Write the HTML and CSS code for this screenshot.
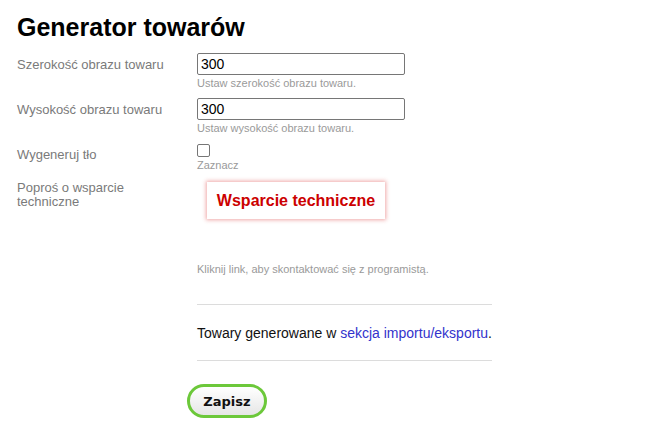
FILE: index.html
```html
<!DOCTYPE html>
<html lang="pl">
<head>
<meta charset="utf-8">
<title>Generator towarów</title>
<link rel="stylesheet" href="styles.css">
</head>
<body>
<div class="page">
  <h1 class="title">Generator towarów</h1>
  <form class="form">
    <div class="row">
      <label class="label">Szerokość obrazu towaru</label>
      <div class="field">
        <input class="input" type="text" value="300">
        <div class="hint">Ustaw szerokość obrazu towaru.</div>
      </div>
    </div>
    <div class="row">
      <label class="label">Wysokość obrazu towaru</label>
      <div class="field">
        <input class="input" type="text" value="300">
        <div class="hint">Ustaw wysokość obrazu towaru.</div>
      </div>
    </div>
    <div class="row row-check">
      <label class="label label-check">Wygeneruj tło</label>
      <div class="field">
        <span class="checkbox"></span>
        <div class="hint">Zaznacz</div>
      </div>
    </div>
    <div class="row row-support">
      <label class="label label-support">Poproś o wsparcie techniczne</label>
      <div class="field">
        <a class="support-btn">Wsparcie techniczne</a>
        <div class="hint hint-support">Kliknij link, aby skontaktować się z programistą.</div>
      </div>
    </div>
    <div class="info">
      <hr class="sep">
      <p class="info-text">Towary generowane w <a class="link">sekcja importu/eksportu</a>.</p>
      <hr class="sep">
    </div>
    <div class="actions">
      <button type="button" class="save">Zapisz</button>
    </div>
  </form>
</div>
</body>
</html>
```
FILE: styles.css
```css
* { box-sizing: border-box; }
html, body { margin: 0; padding: 0; background: #fff; }
body { font-family: "Liberation Sans", Arial, sans-serif; color: #000; }
.page { padding: 11px 17px 0 17px; }
.title {
  margin: 0;
  font-size: 25px;
  line-height: 32px;
  font-weight: bold;
}
.form { margin-top: 10px; }
.row { display: flex; margin-bottom: 8px; }
.label {
  width: 180px;
  flex: none;
  font-size: 13px;
  color: #7a7a7a;
  padding-top: 5px;
  line-height: 14px;
}
.field { display: flex; flex-direction: column; }
.input {
  width: 208px;
  height: 22px;
  margin: 0;
  border: 1px solid #767676;
  border-radius: 2px;
  padding: 1px 3px;
  font-family: "Liberation Sans", Arial, sans-serif;
  font-size: 14px;
  color: #000;
}
.hint {
  font-size: 11px;
  color: #9a9a9a;
  line-height: 14px;
  margin-top: 1px;
}
.row-check { margin-top: 0; }
.label-check { padding-top: 5px; }
.checkbox {
  display: block;
  width: 13px;
  height: 13px;
  border: 1px solid #767676;
  border-radius: 2px;
  margin-top: 1px;
}
.row-support { margin-top: 6px; }
.label-support { width: 130px; margin-right: 50px; padding-top: 1px; }
.support-btn {
  display: block;
  margin: 2px 0 0 10px;
  width: 178px;
  height: 37px;
  line-height: 37px;
  text-align: center;
  background: #fff;
  color: #cc0000;
  font-weight: bold;
  font-size: 16px;
  box-shadow: 0 0 4px 1px rgba(220, 60, 60, 0.45);
}
.hint-support { margin-top: 43px; }
.info { margin-left: 180px; width: 295px; margin-top: 28px; }
.sep { border: 0; border-top: 1px solid #dcdcdc; margin: 0; }
.info-text {
  margin: 0;
  padding: 20px 0 19px;
  font-size: 14px;
  line-height: 16px;
  color: #111;
}
.link { color: #3333cc; text-decoration: none; }
.actions { margin-left: 170px; margin-top: 23px; }
.save {
  width: 80px;
  height: 34px;
  border: 3px solid #6cc83a;
  border-radius: 17px;
  background: linear-gradient(#ffffff, #e6e6e6);
  font-family: "DejaVu Sans", Verdana, sans-serif;
  font-weight: bold;
  font-size: 13px;
  color: #111;
  padding: 0;
}
```
